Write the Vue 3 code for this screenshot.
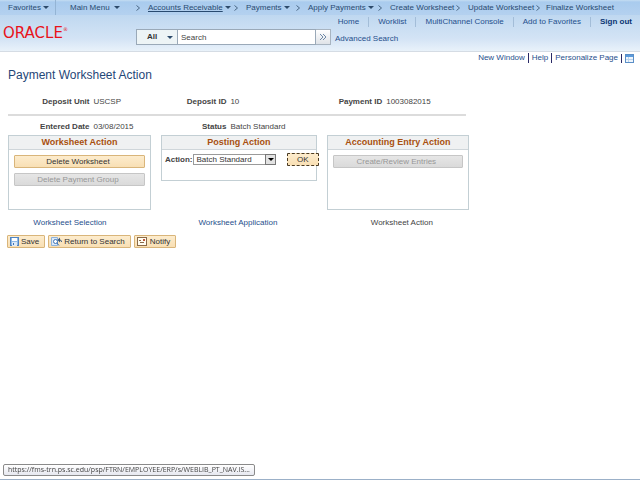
<template>
  <div class="page">
    <nav class="crumbs" aria-label="Breadcrumbs">
      <div v-for="item in crumbs" :key="item.label" class="crumb">
        <a href="#" :class="{ current: item.current }">{{ item.label }}</a>
        <span v-if="item.menu" class="caret"></span>
        <svg v-if="item.next" class="chev" viewBox="0 0 4 6" aria-hidden="true">
          <path d="M0.5 0.5L3.5 3L0.5 5.5" fill="none" stroke="#4a6785" />
        </svg>
      </div>
    </nav>

    <header class="header">
      <div class="logo">ORACLE<sup>®</sup></div>
      <nav class="top-links" aria-label="Account">
        <a v-for="link in topLinks" :key="link" href="#">{{ link }}</a>
        <a href="#" class="sign-out">Sign out</a>
      </nav>
      <form class="search" @submit.prevent>
        <button type="button" class="scope">All <span class="caret"></span></button>
        <input v-model="query" type="text" placeholder="Search" aria-label="Search" />
        <button type="submit" class="go" aria-label="Go">
          <svg viewBox="0 0 8 8" aria-hidden="true">
            <path d="M1 1L4 4L1 7M4 1L7 4L4 7" fill="none" stroke="#6d88a6" />
          </svg>
        </button>
        <a href="#">Advanced Search</a>
      </form>
    </header>

    <nav class="page-links" aria-label="Page">
      <a href="#">New Window</a>
      <a href="#">Help</a>
      <a href="#">Personalize Page</a>
      <a href="#" class="grid-link" aria-label="Page layout">
        <svg viewBox="0 0 9 9" aria-hidden="true">
          <rect x="0.5" y="0.5" width="8" height="8" fill="#eef5fc" stroke="#5b8fc7" />
          <rect x="1" y="1" width="7" height="2" fill="#5b9bdc" />
          <path d="M1 5.5H8M3.5 3V8" stroke="#bcd4ec" />
        </svg>
      </a>
    </nav>

    <main class="content">
      <h1>Payment Worksheet Action</h1>

      <dl class="fields">
        <div><dt>Deposit Unit</dt><dd>USCSP</dd></div>
        <div><dt>Deposit ID</dt><dd>10</dd></div>
        <div><dt>Payment ID</dt><dd>1003082015</dd></div>
      </dl>
      <hr />
      <dl class="fields">
        <div><dt>Entered Date</dt><dd>03/08/2015</dd></div>
        <div><dt>Status</dt><dd>Batch Standard</dd></div>
      </dl>

      <div class="panels">
        <section class="panel tall">
          <h2>Worksheet Action</h2>
          <div class="stack">
            <button type="button" class="btn">Delete Worksheet</button>
            <button type="button" class="btn" disabled>Delete Payment Group</button>
          </div>
        </section>
        <section class="panel">
          <h2>Posting Action</h2>
          <div class="posting">
            <label for="action">Action:</label>
            <div class="select">
              <select id="action" v-model="action">
                <option>Batch Standard</option>
              </select>
              <span class="drop"><span class="caret"></span></span>
            </div>
            <button type="button" class="btn ok">OK</button>
          </div>
        </section>
        <section class="panel tall">
          <h2>Accounting Entry Action</h2>
          <div class="stack">
            <button type="button" class="btn" disabled>Create/Review Entries</button>
          </div>
        </section>
      </div>

      <nav class="tabs" aria-label="Worksheet">
        <a href="#">Worksheet Selection</a>
        <a href="#">Worksheet Application</a>
        <span>Worksheet Action</span>
      </nav>

      <div class="toolbar">
        <button type="button" class="btn">
          <svg viewBox="0 0 9 9" aria-hidden="true">
            <rect x="0.5" y="0.5" width="8" height="8" fill="#8fb9e6" stroke="#4f84c2" />
            <rect x="2" y="1" width="5" height="3" fill="#fff" />
            <rect x="2" y="5" width="5" height="4" fill="#dce9f7" />
            <rect x="3" y="6" width="1" height="2" fill="#3f74b5" />
          </svg>
          Save
        </button>
        <button type="button" class="btn">
          <svg class="wide" viewBox="0 0 11 9" aria-hidden="true">
            <path d="M0.5 0.5H6.5V8.5H0.5Z" fill="#dbe9f8" stroke="#8db2dc" />
            <circle cx="4.5" cy="4.5" r="2" fill="#fff" stroke="#3f74b5" />
            <path d="M6 6L8 8.5" stroke="#3f74b5" />
            <path d="M8 3H9Q10.5 3 10.5 5" fill="none" stroke="#38587c" />
            <path d="M9 0.5V5.5L6.5 3Z" fill="#38587c" />
          </svg>
          Return to Search
        </button>
        <button type="button" class="btn">
          <svg class="wide" viewBox="0 0 11 9" aria-hidden="true">
            <rect x="0.5" y="0.5" width="9" height="8" fill="#fffdf2" stroke="#8a6a48" />
            <path d="M2 3.5H4M3 5.5H7" stroke="#8a6a48" />
            <rect x="6" y="2" width="2" height="2" fill="#c0563b" />
          </svg>
          Notify
        </button>
      </div>
    </main>

    <div class="status">https://fms-trn.ps.sc.edu/psp/FTRN/EMPLOYEE/ERP/s/WEBLIB_PT_NAV.IS...</div>
    <div class="edge"></div>
  </div>
</template>

<script setup>
import { ref } from "vue";

const query = ref("");
const action = ref("Batch Standard");

const crumbs = [
  { label: "Favorites", menu: true },
  { label: "Main Menu", menu: true, next: true },
  { label: "Accounts Receivable", menu: true, next: true, current: true },
  { label: "Payments", menu: true, next: true },
  { label: "Apply Payments", menu: true, next: true },
  { label: "Create Worksheet", next: true },
  { label: "Update Worksheet", next: true },
  { label: "Finalize Worksheet" },
];

const topLinks = ["Home", "Worklist", "MultiChannel Console", "Add to Favorites"];
</script>

<style>
body {
  margin: 0;
  background: #fff;
}
</style>

<style scoped>
.page {
  min-height: 100vh;
  font-family: "Liberation Sans", Arial, sans-serif;
  font-size: 8px;
  line-height: 10px;
  color: #444;
}
.page * {
  box-sizing: border-box;
}
a {
  color: #1f4f8c;
  text-decoration: none;
  white-space: nowrap;
}
button,
input,
select {
  font: inherit;
  margin: 0;
}
svg {
  display: block;
  flex: none;
}
.caret {
  flex: none;
  border: 3px solid transparent;
  border-top-color: #2c4a6b;
  border-bottom: 0;
}

.crumbs {
  display: grid;
  grid-template-columns: 56fr 92fr 98fr 62fr 82fr 78fr 78fr 94fr;
  height: 15px;
  background: linear-gradient(#c4ddf2 0, #a9cbee 2px, #b4d1ef 100%);
}
.crumb {
  display: flex;
  align-items: center;
  gap: 2px;
  min-width: 0;
}
.crumb:first-child {
  padding-left: 8px;
  border-right: 1px solid #94b4d4;
}
.crumb:nth-child(2) {
  padding-left: 14px;
  gap: 4px;
}
.crumb a {
  color: #284a70;
}
.crumb .current {
  text-decoration: underline;
}
.chev {
  width: 4px;
  height: 6px;
  margin-left: auto;
  margin-right: 8px;
}

.header {
  display: grid;
  grid-template-columns: 136px 1fr;
  grid-template-rows: 14px 22px;
  background: linear-gradient(#bfd8f0, #d3e3f5 65%, #e9f2fa);
  border-bottom: 1px solid #d5dce4;
}
.logo {
  display: flex;
  grid-row: 1 / 3;
  align-self: center;
  padding-left: 3px;
  font-family: "DejaVu Sans", sans-serif;
  font-size: 15px;
  line-height: 16px;
  color: #e8131c;
}
.logo sup {
  font-size: 5px;
  line-height: 8px;
}
.top-links {
  display: flex;
  justify-content: flex-end;
  align-items: center;
  padding-right: 8px;
}
.top-links a + a {
  margin-left: 9px;
  padding-left: 9px;
  border-left: 1px solid #a3bdd8;
}
.top-links .sign-out {
  font-weight: bold;
  color: #0b3472;
}
.search {
  display: flex;
  align-items: flex-start;
}
.search > a {
  margin: 5px 0 0 4px;
}
.scope {
  display: flex;
  align-items: center;
  justify-content: space-between;
  width: 42px;
  height: 16px;
  padding: 0 4px 0 10px;
  border: 1px solid #9aa9b8;
  background: #edf4f6;
  font-weight: bold;
  color: #333;
}
.search input {
  width: 138px;
  height: 16px;
  padding: 0 3px;
  border: 1px solid #9aa9b8;
  border-left: 0;
  border-radius: 0;
  background: #fff;
  color: #444;
}
.search input::placeholder {
  color: #444;
  opacity: 1;
}
.go {
  display: flex;
  align-items: center;
  justify-content: center;
  width: 15px;
  height: 16px;
  padding: 0;
  border: 1px solid #a8b4c0;
  border-left: 0;
  background: linear-gradient(#fff, #dfe3e8);
}
.go svg {
  width: 8px;
  height: 8px;
}

.page-links {
  display: flex;
  justify-content: flex-end;
  align-items: center;
  padding: 1px 6px 0 0;
}
.page-links a + a {
  margin-left: 3px;
  padding-left: 3px;
  border-left: 1px solid #2a2a66;
}
.grid-link svg {
  width: 9px;
  height: 9px;
}

.content {
  width: 72%;
  margin-left: 8px;
}
h1 {
  margin: 5px 0 0;
  font-size: 12px;
  line-height: 14px;
  font-weight: normal;
  color: #1f4778;
}
.fields,
.panels {
  display: grid;
  grid-template-columns: 143fr 156fr 142fr;
  column-gap: 10px;
}
.fields {
  margin: 15px 0 0;
}
hr + .fields {
  margin-top: 6px;
}
.fields div {
  display: flex;
  gap: 4px;
}
.fields dt {
  width: 57%;
  font-weight: bold;
  text-align: right;
  white-space: nowrap;
}
.fields div:nth-child(2) dt {
  width: 42%;
}
.fields div:nth-child(3) dt {
  width: 39%;
}
.fields dd {
  margin: 0;
  white-space: nowrap;
}
hr {
  height: 2px;
  margin: 7px 3px 0 0;
  border: 0;
  background: #dcdcdc;
}

.panels {
  align-items: start;
  margin-top: 3px;
}
.panel {
  min-width: 0;
  min-height: 46px;
  border: 1px solid #c3cfd4;
}
.tall {
  min-height: 75px;
}
h2 {
  margin: 0;
  font-size: 9px;
  line-height: 13px;
  text-align: center;
  white-space: nowrap;
  color: #a8500f;
  background: #eff1f2;
  border-bottom: 1px solid #cfd6da;
}
.stack {
  display: flex;
  flex-direction: column;
  gap: 5px;
  padding: 5px 5px 0;
}
.btn {
  display: flex;
  align-items: center;
  justify-content: center;
  gap: 2px;
  height: 13px;
  padding: 0 5px 0 2px;
  border: 1px solid #d9b57a;
  border-radius: 1px;
  background: linear-gradient(#fdeccd, #f8dfb4);
  color: #333;
  white-space: nowrap;
}
.btn:disabled {
  border-color: #c6c6c6;
  background: linear-gradient(#e6e6e6, #dadada);
  color: #979797;
}
.btn svg {
  width: 9px;
  height: 9px;
}
.btn .wide {
  width: 11px;
}
.posting {
  display: flex;
  align-items: center;
  gap: 1px;
  padding: 3px 0 0 3px;
}
.posting label {
  font-weight: bold;
}
.select {
  position: relative;
  flex: 0 1 83px;
}
.select select {
  display: block;
  width: 100%;
  height: 11px;
  padding: 0 12px 0 2px;
  border: 1px solid #9a9a9a;
  border-radius: 0;
  background: #fff;
  color: #333;
  appearance: none;
}
.drop {
  position: absolute;
  top: 0;
  right: 0;
  display: flex;
  align-items: center;
  justify-content: center;
  width: 11px;
  height: 11px;
  border: 1px solid #777;
  background: #e2e2e2;
  pointer-events: none;
}
.drop .caret {
  border-top-color: #000;
}
.ok {
  width: 32px;
  margin-left: auto;
  margin-right: -3px;
  padding: 0;
  border: 1px dashed #4a3a22;
}

.tabs {
  display: grid;
  grid-template-columns: 124fr 212fr 116fr;
  padding-right: 9px;
  margin-top: 8px;
  text-align: center;
  white-space: nowrap;
}
.toolbar {
  display: flex;
  gap: 3px;
  margin-top: 7px;
  margin-left: -1px;
}

.status {
  position: fixed;
  left: 3px;
  bottom: 4px;
  padding: 0 4px;
  border: 1px solid #8a8a8a;
  border-radius: 2px;
  background: linear-gradient(#fff, #e6e8f0);
  font-family: "Open Sans", "Noto Sans", sans-serif;
  font-size: 7px;
  color: #444;
}
.edge {
  position: fixed;
  left: 0;
  right: 0;
  bottom: 0;
  height: 1px;
  background: #9bb0c8;
}
</style>
